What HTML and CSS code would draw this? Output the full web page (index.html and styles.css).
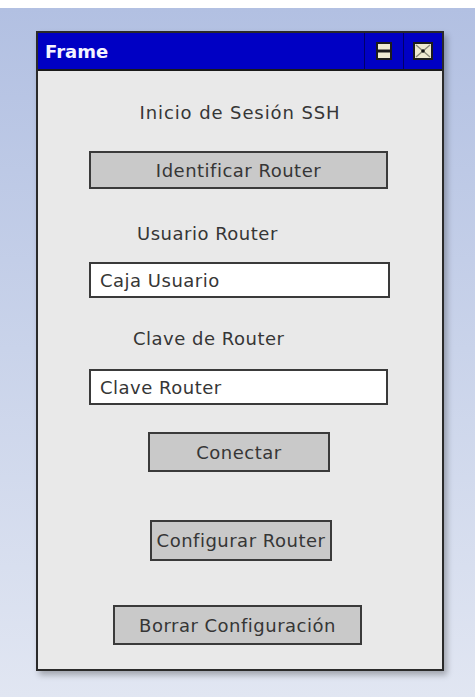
FILE: index.html
```html
<!DOCTYPE html>
<html lang="es">
<head>
    <meta charset="UTF-8">
    <meta name="viewport" content="width=device-width, initial-scale=1.0">
    <title>Frame</title>
    <link rel="stylesheet" href="styles.css">
</head>
<body>
    <div class="frame">
        <div class="frame-title">
            <span class="frame-name">Frame</span>
            <div class="frame-controls">
                <!-- maximize -->
                <span class="ctrl">
                    <svg width="16" height="18" viewBox="0 0 16 18">
                        <rect x="0" y="0" width="16" height="18" fill="#1c1c1c"/>
                        <rect x="2" y="2" width="12" height="5.5" fill="#efebd2"/>
                        <rect x="2" y="10.5" width="12" height="5.5" fill="#efebd2"/>
                    </svg>
                </span>
                <!-- close -->
                <span class="ctrl">
                    <svg width="20" height="18" viewBox="0 0 20 18">
                        <rect x="1" y="1" width="18" height="16" fill="#eeead0" stroke="#1c1c1c" stroke-width="2"/>
                        <path d="M3 3 L17 15 M17 3 L3 15" stroke="#8a8a78" stroke-width="1.4"/>
                        <circle cx="10" cy="9" r="1.8" fill="#111"/>
                    </svg>
                </span>
            </div>
        </div>

        <div class="frame-body">
            <div class="heading">Inicio de Sesión SSH</div>
            <button class="btn btn-identify">Identificar Router</button>

            <div class="label label-user">Usuario Router</div>
            <input class="field" type="text" value="Caja Usuario">

            <div class="label label-pass">Clave de Router</div>
            <input class="field field-pass" type="text" value="Clave Router">

            <button class="btn btn-connect">Conectar</button>
            <button class="btn btn-config">Configurar Router</button>
            <button class="btn btn-erase">Borrar Configuración</button>
        </div>
    </div>
</body>
</html>
```

FILE: styles.css
```css
body {
    margin: 0;
    height: 697px;
    padding-top: 31px;
    box-sizing: border-box;
    background: linear-gradient(to bottom, #ffffff 0, #ffffff 8px, #b2c0e2 8px, #c9d3ea 50%, #e1e6f2 100%);
    font-family: 'DejaVu Sans', Verdana, sans-serif;
}

.frame {
    margin-left: 36px;
    width: 408px;
    height: 640px;
    box-sizing: border-box;
    border: 2px solid #2a2a2a;
    background-color: #e9e9e9;
    box-shadow: 3px 4px 6px rgba(0, 0, 0, 0.28);
    display: flex;
    flex-direction: column;
}

.frame-title {
    height: 36px;
    background-color: #0000c4;
    border-bottom: 2px solid #1a1a1a;
    display: flex;
    align-items: center;
    justify-content: space-between;
}

.frame-name {
    color: #f4f4ff;
    font-weight: bold;
    font-size: 18px;
    padding-left: 7px;
}

.frame-controls {
    display: flex;
    height: 100%;
}

.ctrl {
    width: 38px;
    height: 100%;
    border-left: 1px solid #00006a;
    display: flex;
    align-items: center;
    justify-content: center;
}

.frame-body {
    display: flex;
    flex-direction: column;
    align-items: flex-start;
    color: #363636;
    font-size: 18px;
    letter-spacing: 0.5px;
}

.heading {
    align-self: center;
    margin-top: 31px;
    line-height: 22px;
    letter-spacing: 0.9px;
}

.label {
    line-height: 22px;
}

.label-user {
    margin-top: 34px;
    margin-left: 99px;
}

.label-pass {
    margin-top: 30px;
    margin-left: 95px;
}

.btn {
    font-family: inherit;
    font-size: 18px;
    letter-spacing: inherit;
    color: #363636;
    background-color: #c9c9c9;
    border: 2px solid #3a3a3a;
    padding: 0;
    box-sizing: border-box;
}

.btn-identify {
    margin-top: 27px;
    margin-left: 51px;
    width: 299px;
    height: 38px;
}

.btn-connect {
    margin-top: 27px;
    margin-left: 110px;
    width: 182px;
    height: 40px;
}

.btn-config {
    margin-top: 48px;
    margin-left: 112px;
    width: 182px;
    height: 41px;
}

.btn-erase {
    margin-top: 44px;
    margin-left: 75px;
    width: 249px;
    height: 40px;
}

.field {
    margin-top: 17px;
    margin-left: 51px;
    width: 301px;
    height: 36px;
    box-sizing: border-box;
    border: 2px solid #3a3a3a;
    background-color: #fff;
    padding: 0 9px;
    font-family: inherit;
    font-size: 18px;
    letter-spacing: inherit;
    color: #363636;
}

.field-pass {
    margin-top: 19px;
    width: 299px;
}
```
